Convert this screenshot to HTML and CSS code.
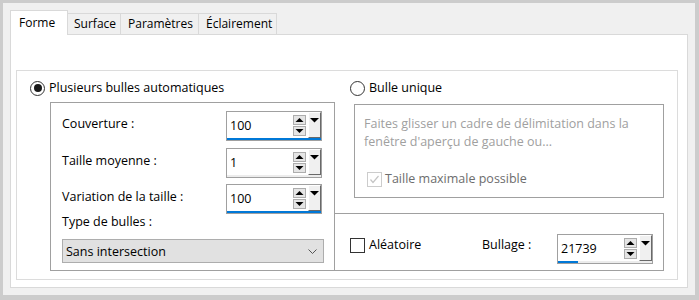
FILE: index.html
```html
<!DOCTYPE html>
<html lang="fr">
<head>
  <meta charset="UTF-8" />
  <title>Bulles – Forme</title>
  <link rel="stylesheet" href="styles.css">
</head>
<body>

  <div class="window">
    <!-- Tabs -->
    <div class="tabs">
      <div class="tab tab-forme active">Forme</div>
      <div class="tab tab-surface">Surface</div>
      <div class="tab tab-params">Paramètres</div>
      <div class="tab tab-light">Éclairement</div>
    </div>

    <div class="panel">
      <div class="frame">

        <!-- Left column: automatic bubbles -->
        <div class="col-left">
          <div class="radio-row"><span class="radio"><span class="dot"></span></span>Plusieurs bulles automatiques</div>
          <div class="group group-auto">
            <div class="field">
              <span class="field-label">Couverture :</span>
              <div class="spin">
                <div class="spin-main">
                  <span class="spin-val">100</span>
                  <div class="spin-arrows">
                    <span class="spin-btn"><svg width="11" height="8"><polygon points="1.5,6 9.5,6 5.5,2" /></svg></span>
                    <span class="spin-btn"><svg width="11" height="8"><polygon points="1.5,2 9.5,2 5.5,6" /></svg></span>
                  </div>
                  <span class="spin-drop"><svg width="11" height="12"><polygon points="1,5 10,5 5.5,9.5" /></svg></span>
                </div>
                <div class="spin-track"><div class="spin-fill" style="width: 100%"></div></div>
              </div>
            </div>
            <div class="field">
              <span class="field-label">Taille moyenne :</span>
              <div class="spin">
                <div class="spin-main">
                  <span class="spin-val">1</span>
                  <div class="spin-arrows">
                    <span class="spin-btn"><svg width="11" height="8"><polygon points="1.5,6 9.5,6 5.5,2" /></svg></span>
                    <span class="spin-btn"><svg width="11" height="8"><polygon points="1.5,2 9.5,2 5.5,6" /></svg></span>
                  </div>
                  <span class="spin-drop"><svg width="11" height="12"><polygon points="1,5 10,5 5.5,9.5" /></svg></span>
                </div>
                <div class="spin-track"><div class="spin-fill" style="width: 0%"></div></div>
              </div>
            </div>
            <div class="field">
              <span class="field-label">Variation de la taille :</span>
              <div class="spin">
                <div class="spin-main">
                  <span class="spin-val">100</span>
                  <div class="spin-arrows">
                    <span class="spin-btn"><svg width="11" height="8"><polygon points="1.5,6 9.5,6 5.5,2" /></svg></span>
                    <span class="spin-btn"><svg width="11" height="8"><polygon points="1.5,2 9.5,2 5.5,6" /></svg></span>
                  </div>
                  <span class="spin-drop"><svg width="11" height="12"><polygon points="1,5 10,5 5.5,9.5" /></svg></span>
                </div>
                <div class="spin-track"><div class="spin-fill" style="width: 100%"></div></div>
              </div>
            </div>
            <div class="type-label">Type de bulles :</div>
            <div class="select">
              <span>Sans intersection</span>
              <svg width="9" height="5"><polyline points="0.5,0.5 4.5,4.5 8.5,0.5" /></svg>
            </div>
          </div>
        </div>

        <!-- Right column: single bubble + random -->
        <div class="col-right">
          <div class="radio-row"><span class="radio"></span>Bulle unique</div>
          <div class="group group-single">
            <p class="hint">Faites glisser un cadre de délimitation dans la<br>fenêtre d'aperçu de gauche ou...</p>
            <div class="check-row disabled">
              <span class="checkbox"><svg width="13" height="13"><polyline points="2.5,6.5 5,9.5 10.5,3" /></svg></span>
              Taille maximale possible
            </div>
          </div>
          <div class="group group-bottom">
            <div class="check-row random">
              <span class="checkbox"></span>
              Aléatoire
            </div>
            <span class="bullage-label">Bullage :</span>
            <div class="spin">
              <div class="spin-main">
                <span class="spin-val">21739</span>
                <div class="spin-arrows">
                  <span class="spin-btn"><svg width="11" height="8"><polygon points="1.5,6 9.5,6 5.5,2" /></svg></span>
                  <span class="spin-btn"><svg width="11" height="8"><polygon points="1.5,2 9.5,2 5.5,6" /></svg></span>
                </div>
                <span class="spin-drop"><svg width="11" height="12"><polygon points="1,5 10,5 5.5,9.5" /></svg></span>
              </div>
              <div class="spin-track"><div class="spin-fill" style="width: 21%"></div></div>
            </div>
          </div>
        </div>

      </div>
    </div>
  </div>

</body>
</html>
```

FILE: styles.css
```css
body {
  margin: 0;
  background-color: #cccccc;
  font-family: "Open Sans", sans-serif;
  font-size: 12.5px;
  color: #000;
  height: 300px;
  overflow: hidden;
}

.window {
  margin: 3px 4px 5px 3px;
  height: 292px;
  box-sizing: border-box;
  padding: 7px;
  background-color: #f0f0f0;
  display: flex;
  flex-direction: column;
}

/* Tabs */
.tabs {
  display: flex;
  align-items: flex-end;
  height: 24px;
  flex-shrink: 0;
}

.tab {
  box-sizing: border-box;
  height: 21px;
  line-height: 20px;
  font-size: 12px;
  border: 1px solid #d9d9d9;
  border-bottom: none;
  margin-left: -1px;
  padding-left: 6px;
  background-color: #f0f0f0;
  white-space: nowrap;
}

.tab.active {
  margin-left: 0;
  height: 25px;
  line-height: 24px;
  padding-left: 8px;
  margin-bottom: -1px;
  background-color: #fff;
  position: relative;
  z-index: 1;
}

.tab-forme { width: 58px; }
.tab-surface { width: 54px; }
.tab-params { width: 79px; padding-left: 7px; }
.tab-light { width: 79px; padding-left: 7px; }

.panel {
  flex: 1;
  display: flex;
  background-color: #fff;
  border: 1px solid #d9d9d9;
  padding: 35px 9px 7px 5px;
}

.frame {
  flex: 1;
  display: flex;
  border: 1px solid #dcdcdc;
  padding: 9px 13px 8px 13px;
}

.col-left {
  width: 305px;
  display: flex;
  flex-direction: column;
}

.col-right {
  flex: 1;
  display: flex;
  flex-direction: column;
}

.radio-row {
  display: flex;
  align-items: center;
  gap: 4px;
  height: 16px;
  line-height: 16px;
  white-space: nowrap;
}

.col-right .radio-row {
  padding-left: 15px;
}

.radio {
  width: 15px;
  height: 15px;
  box-sizing: border-box;
  border: 1px solid #333;
  border-radius: 50%;
  background-color: #fff;
  display: flex;
  align-items: center;
  justify-content: center;
}

.radio .dot {
  width: 8px;
  height: 8px;
  border-radius: 50%;
  background-color: #1a1a1a;
}

/* Group boxes */
.group {
  box-sizing: border-box;
  border: 1px solid #a0a0a0;
}

.group-auto {
  flex: 1;
  margin: 6px 0 0 20px;
  padding: 8px 12px 0 11px;
  display: flex;
  flex-direction: column;
}

.field {
  display: flex;
  justify-content: space-between;
  margin-bottom: 6px;
}

.field:first-child {
  margin-bottom: 7px;
}

.field:nth-child(3) {
  margin-bottom: 0;
}

.field-label {
  line-height: 25px;
  white-space: nowrap;
}

.type-label {
  line-height: 16px;
}

.select {
  margin-top: 9px;
  width: 262px;
  height: 24px;
  box-sizing: border-box;
  border: 1px solid #adadad;
  background-color: #e1e1e1;
  display: flex;
  align-items: center;
  justify-content: space-between;
  padding: 0 6px 0 3px;
}

.select svg polyline {
  fill: none;
  stroke: #555;
  stroke-width: 1;
}

/* Spinner with slider track */
.spin {
  width: 96px;
  height: 30px;
  box-sizing: border-box;
  border: 1px solid #a0a0a0;
  background-color: #fff;
  display: flex;
  flex-direction: column;
  flex-shrink: 0;
}

.spin-main {
  flex: 1;
  display: flex;
}

.spin-val {
  flex: 1;
  padding: 2px 0 0 3px;
  line-height: 24px;
}

.spin-arrows {
  display: flex;
  flex-direction: column;
  gap: 1px;
  padding-top: 3px;
  margin-right: 2px;
}

.spin-btn {
  width: 13px;
  height: 10px;
  box-sizing: border-box;
  border: 1px solid #adadad;
  background-color: #e5e5e5;
  display: flex;
}

.spin-btn polygon,
.spin-drop polygon {
  fill: #000;
}

.spin-drop {
  width: 13px;
  box-sizing: border-box;
  background-color: #f0f0f0;
  border-top: 1px solid #fff;
  border-left: 1px solid #fff;
  border-right: 1px solid #696969;
  border-bottom: 1px solid #696969;
  display: flex;
}

.spin-track {
  height: 3px;
  background-color: #ececec;
}

.spin-fill {
  height: 100%;
  background-color: #0078d7;
}

/* Single bubble box */
.group-single {
  margin: 8px 0 0 19px;
  height: 94px;
  padding: 10px 0 0 9px;
}

.hint {
  margin: 0;
  line-height: 18px;
  color: #a0a0a0;
  white-space: nowrap;
}

.check-row {
  display: flex;
  align-items: center;
  gap: 3px;
  line-height: 16px;
  white-space: nowrap;
}

.checkbox {
  width: 15px;
  height: 15px;
  box-sizing: border-box;
  border: 1px solid #333;
  background-color: #fff;
  display: flex;
  align-items: center;
  justify-content: center;
}

.check-row.disabled {
  margin: 20px 0 0 3px;
  color: #6d6d6d;
}

.check-row.disabled .checkbox {
  border-color: #cccccc;
}

.check-row.disabled polyline {
  fill: none;
  stroke: #c4c4c4;
  stroke-width: 1.2;
}

/* Bottom box */
.group-bottom {
  margin-top: auto;
  margin-left: -1px;
  height: 58px;
  display: flex;
  align-items: flex-start;
  padding: 20px 10px 0 15px;
}

.check-row.random {
  width: 132px;
  gap: 4px;
  margin-top: 3px;
}

.bullage-label {
  margin-top: 3px;
  line-height: 16px;
}

.group-bottom .spin {
  margin-left: auto;
}
```
